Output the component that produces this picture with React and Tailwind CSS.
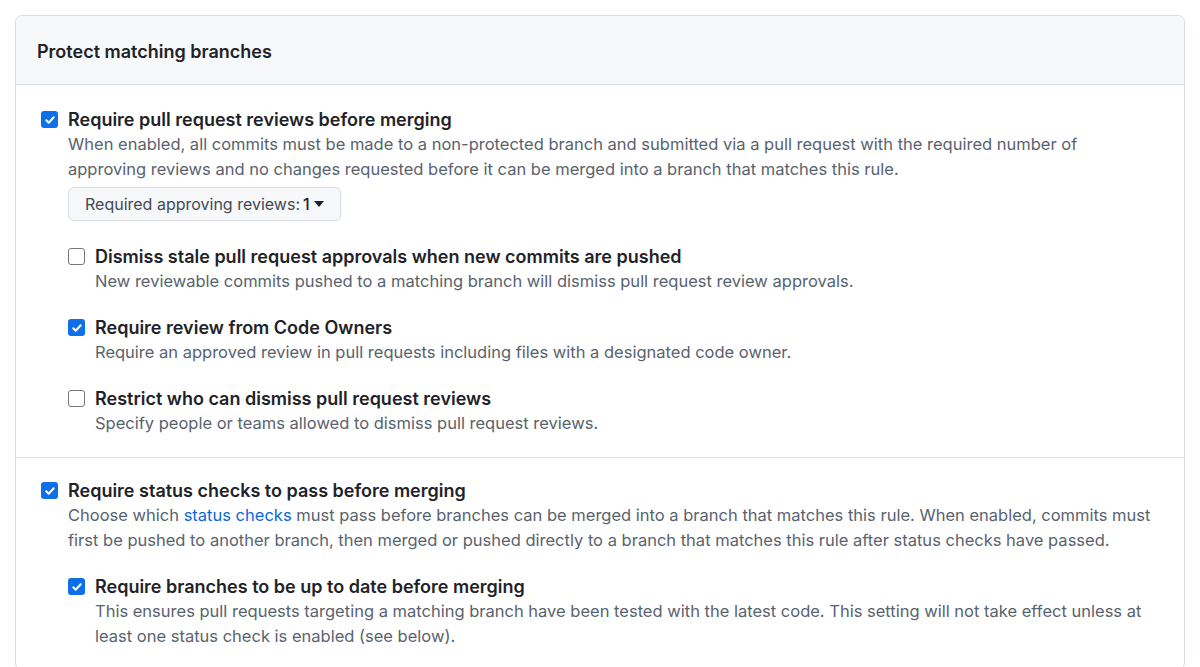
const SUB_REVIEWS = [
  {
    id: 'dismiss',
    checked: false,
    title: 'Dismiss stale pull request approvals when new commits are pushed',
    desc: 'New reviewable commits pushed to a matching branch will dismiss pull request review approvals.'
  },
  {
    id: 'codeowners',
    checked: true,
    title: 'Require review from Code Owners',
    desc: 'Require an approved review in pull requests including files with a designated code owner.'
  },
  {
    id: 'restrict',
    checked: false,
    title: 'Restrict who can dismiss pull request reviews',
    desc: 'Specify people or teams allowed to dismiss pull request reviews.'
  }
];

function Checkbox({ checked }) {
  if (checked) {
    return (
      <span className="mt-[4px] flex h-[17px] w-[17px] shrink-0 items-center justify-center rounded-[3px] bg-[#0f6fe8]">
        <svg width="12" height="12" viewBox="0 0 12 12" fill="none">
          <path d="M2.3 6.3l2.4 2.4 5-5.4" stroke="white" strokeWidth="2" strokeLinecap="round" strokeLinejoin="round" />
        </svg>
      </span>
    );
  }
  return <span className="mt-[4px] h-[17px] w-[17px] shrink-0 rounded-[3px] border border-[#767676] bg-white" />;
}

function Option({ checked, title, children }) {
  return (
    <div className="flex gap-[10px]">
      <Checkbox checked={checked} />
      <div className="min-w-0 flex-1">
        <div className="text-[18px] font-semibold leading-[25px] text-[#1f2328]">{title}</div>
        <div className="text-[16.5px] leading-[25px] text-[#59636e]">{children}</div>
      </div>
    </div>
  );
}

export default function App() {
  return (
    <div className="min-h-screen bg-white p-[15px]" style={{ fontFamily: 'Inter, "Noto Sans", sans-serif' }}>
      <div className="overflow-hidden rounded-[7px] border border-[#d8dee4]">
        <div className="flex h-[69px] items-center border-b border-[#d8dee4] bg-[#f6f8fa] px-[21px] pt-[2px]">
          <h2 className="text-[18px] font-semibold text-[#1f2328]">Protect matching branches</h2>
        </div>

        <div className="border-b border-[#d8dee4] px-[25px] pb-[21px] pt-[22px]">
          <Option checked title="Require pull request reviews before merging">
            When enabled, all commits must be made to a non-protected branch and submitted via a pull request with the required number of approving reviews and no changes requested before it can be merged into a branch that matches this rule.
          </Option>
          <div className="pl-[27px]">
            <button className="mt-[5px] flex h-[34px] items-center gap-[3px] rounded-[6px] border border-[#d8dee4] bg-[#f6f8fa] px-[16px] text-[16px] text-[#1f2328]">
              <span className="text-[#424a53]">Required approving reviews:</span>
              <span className="font-medium">1</span>
              <svg width="10" height="6" viewBox="0 0 10 6" className="ml-[1px]">
                <path d="M0 0h10L5 6z" fill="#1f2328" />
              </svg>
            </button>
            <div className="mt-[23px] flex flex-col gap-[21px]">
              {SUB_REVIEWS.map(item => (
                <Option key={item.id} checked={item.checked} title={item.title}>
                  {item.desc}
                </Option>
              ))}
            </div>
          </div>
        </div>

        <div className="px-[25px] pb-[20px] pt-[20px]">
          <Option checked title="Require status checks to pass before merging">
            Choose which <a href="#" className="text-[#0969da]">status checks</a> must pass before branches can be merged into a branch that matches this rule. When enabled, commits must first be pushed to another branch, then merged or pushed directly to a branch that matches this rule after status checks have passed.
          </Option>
          <div className="mt-[21px] pl-[27px]">
            <Option checked title="Require branches to be up to date before merging">
              This ensures pull requests targeting a matching branch have been tested with the latest code. This setting will not take effect unless at least one status check is enabled (see below).
            </Option>
          </div>
        </div>
      </div>
    </div>
  );
}
